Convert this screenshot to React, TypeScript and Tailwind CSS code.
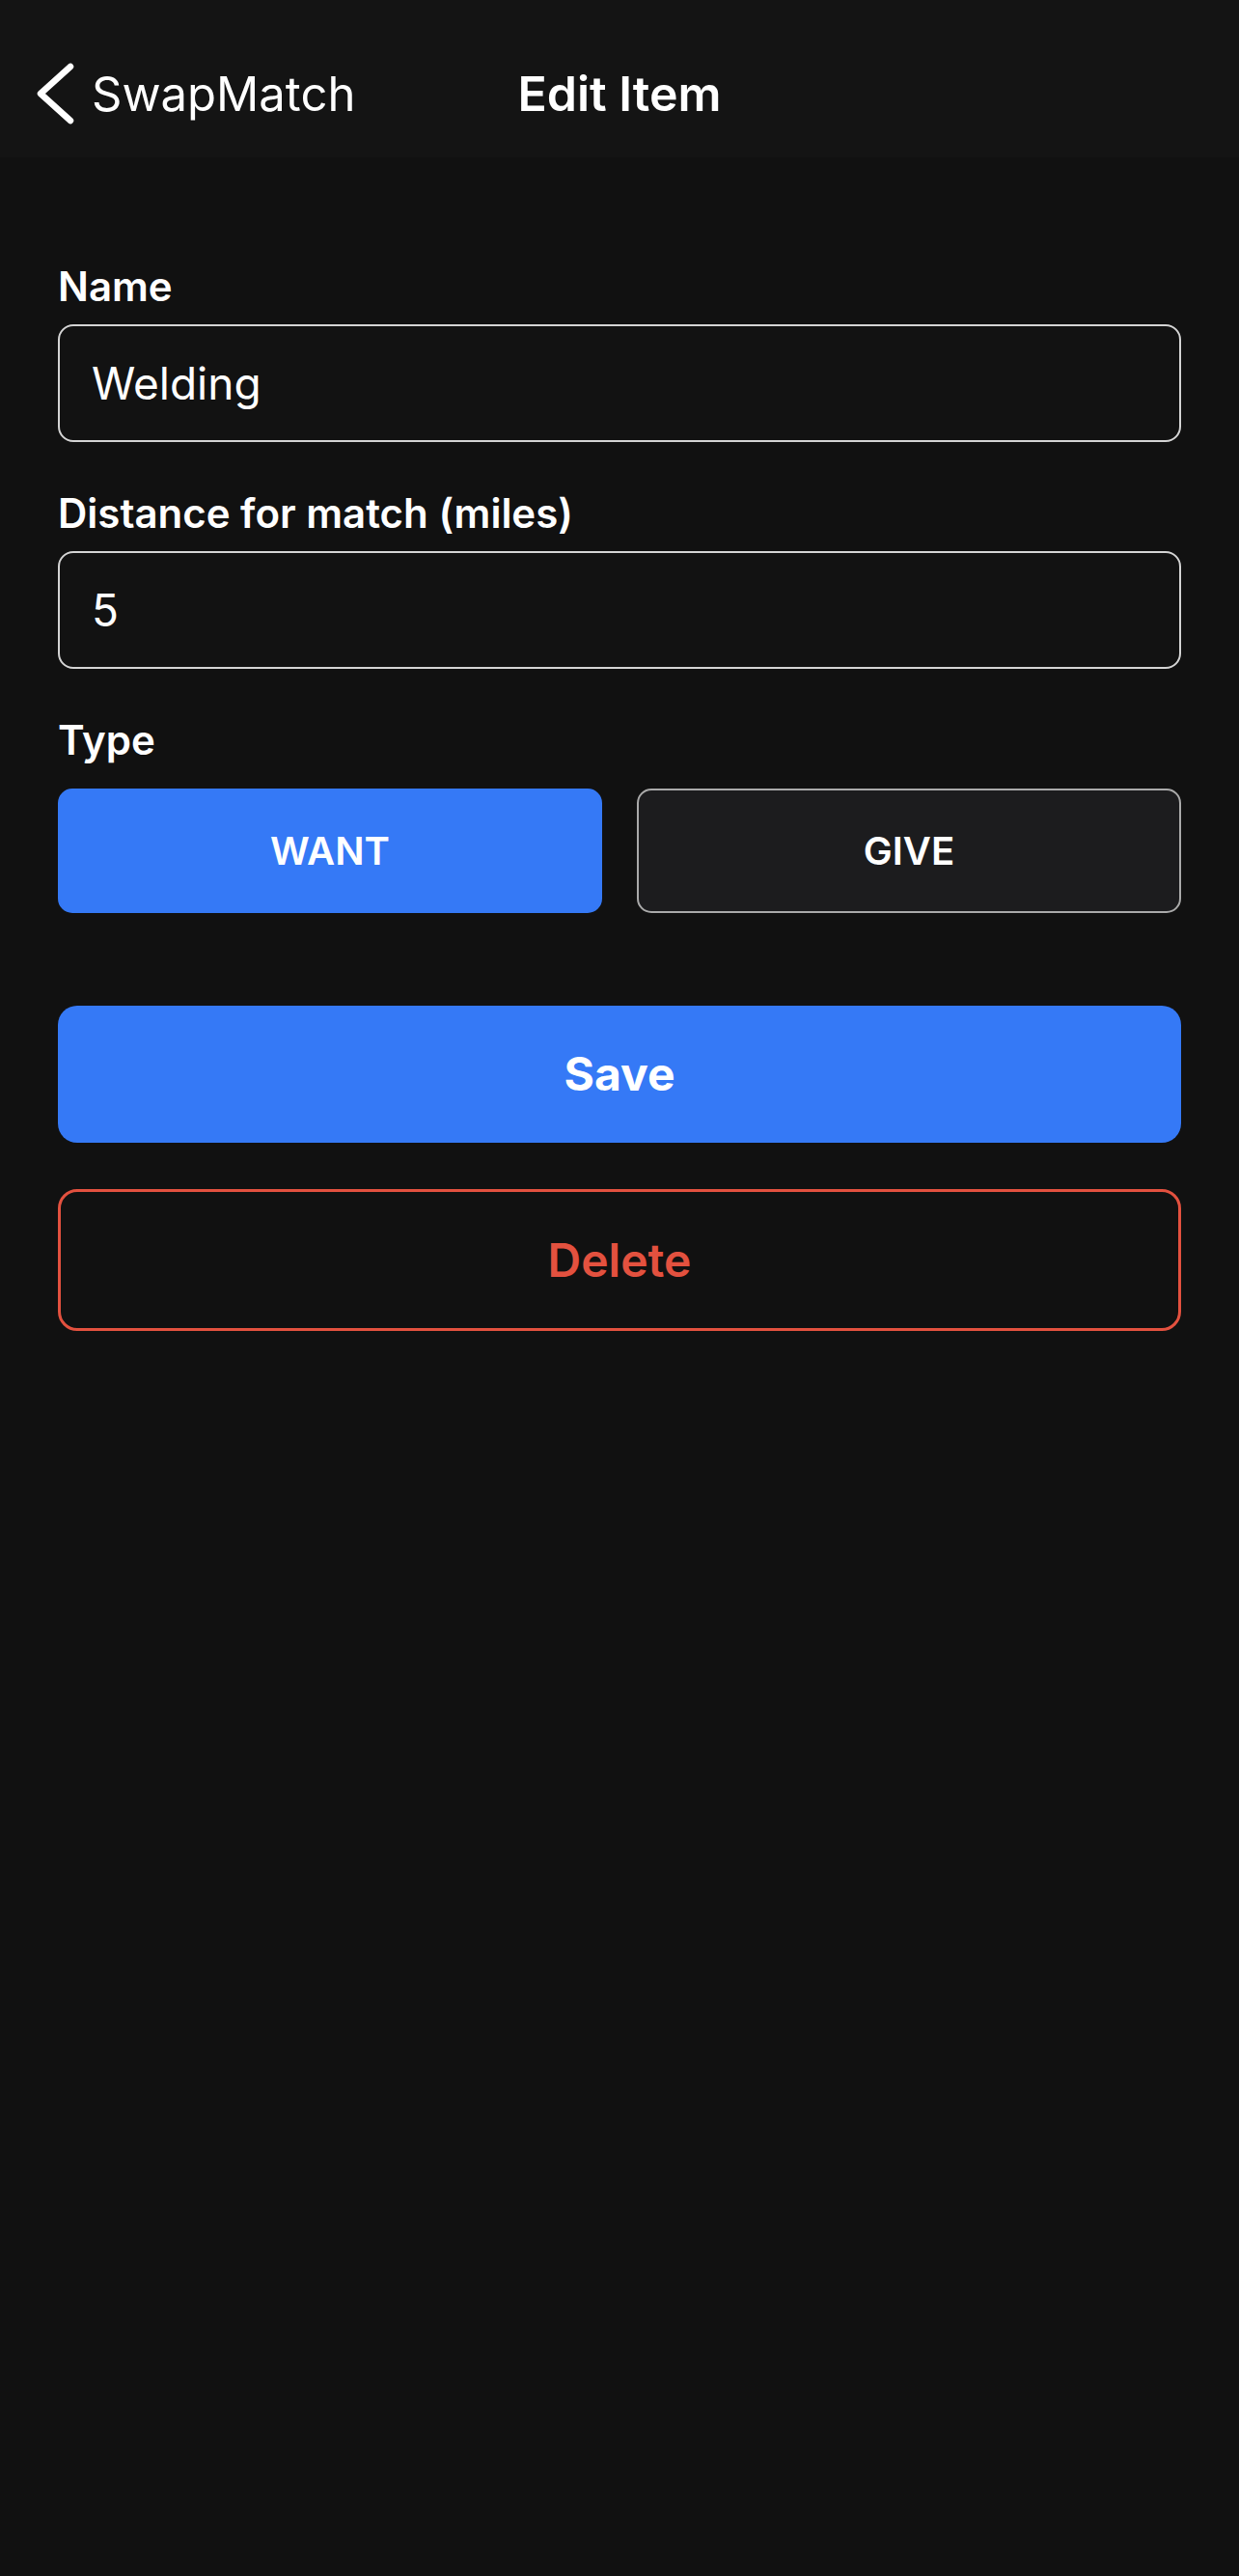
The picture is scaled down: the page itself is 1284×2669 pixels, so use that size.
import { useState } from "react";

const font = { fontFamily: "Inter, 'Noto Sans', sans-serif" };

function Field({ label, value }: { label: string; value: string }) {
  return (
    <div className="flex flex-col">
      <label className="text-[42px] leading-[48px] font-semibold text-white">{label}</label>
      <div className="mt-[15px] h-[122px] rounded-[16px] border-2 border-[#d4d4d4] bg-[#121212] flex items-center px-[33px]">
        <span className="text-[46px] text-white">{value}</span>
      </div>
    </div>
  );
}

export default function App() {
  const [type, setType] = useState<"WANT" | "GIVE">("WANT");

  return (
    <div className="min-h-[2669px] w-full bg-[#111111] flex flex-col" style={font}>
      <header className="h-[163px] bg-[#141414] pt-[31px] grid grid-cols-[1fr_auto_1fr] items-center">
        <button className="flex items-center text-white">
          <svg width="40" height="64" viewBox="0 0 40 64" className="ml-[38px]">
            <polyline
              points="35,4 4,32 35,60"
              fill="none"
              stroke="white"
              strokeWidth="6.5"
              strokeLinecap="round"
              strokeLinejoin="round"
            />
          </svg>
          <span className="ml-[17px] text-[49px] leading-none">SwapMatch</span>
        </button>
        <h1 className="text-[50px] leading-none font-semibold text-white">Edit Item</h1>
        <div />
      </header>

      <main className="px-[60px] pt-[110px] flex flex-col">
        <Field label="Name" value="Welding" />
        <div className="mt-[50px]">
          <Field label="Distance for match (miles)" value="5" />
        </div>

        <div className="mt-[50px]">
          <p className="text-[42px] leading-[48px] font-semibold text-white">Type</p>
          <div className="mt-[26px] grid grid-cols-2 gap-[36px]">
            {(["WANT", "GIVE"] as const).map((t) => (
              <button
                key={t}
                onClick={() => setType(t)}
                className={
                  type === t
                    ? "h-[129px] rounded-[15px] bg-[#3579f6] border-2 border-[#3579f6] text-white text-[40px] font-semibold"
                    : "h-[129px] rounded-[15px] bg-[#1c1c1e] border-2 border-[#aaaaaa] text-white text-[40px] font-semibold"
                }
              >
                {t}
              </button>
            ))}
          </div>
        </div>

        <button className="mt-[96px] h-[142px] rounded-[20px] bg-[#3579f6] text-white text-[48px] font-bold">
          Save
        </button>
        <button className="mt-[48px] h-[147px] rounded-[20px] border-[3px] border-[#e3513f] text-[#e3513f] text-[48px] font-semibold">
          Delete
        </button>
      </main>
    </div>
  );
}
